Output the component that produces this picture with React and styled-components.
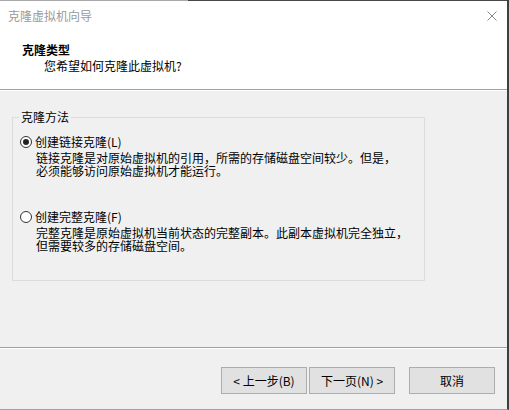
import React from "react";
import styled, { createGlobalStyle } from "styled-components";

const Global = createGlobalStyle`
  html, body { margin: 0; padding: 0; background: #f0f0f0; }
  body { font-family: "Noto Sans CJK SC", "Microsoft YaHei", sans-serif; font-size: 12px; color: #000; }
  * { box-sizing: border-box; }
`;

const Window = styled.div`
  width: 509px;
  height: 410px;
  display: flex;
  flex-direction: column;
  background: #f0f0f0;
  border-right: 2px solid #3f3f3f;
  border-bottom: 1px solid #a0a0a0;
`;

const TopEdge = styled.div`
  height: 1px;
  flex: none;
  background: linear-gradient(to right, #a8a8a8 0, #a8a8a8 188px, #474747 188px, #474747 100%);
`;

const HeaderArea = styled.div`
  height: 88px;
  flex: none;
  background: #fff;
  display: flex;
  flex-direction: column;
`;

const TitleBar = styled.div`
  height: 29px;
  display: flex;
  align-items: center;
  justify-content: space-between;
  padding: 0 10px 0 8px;
`;

const TitleText = styled.span`
  color: #9a9a9a;
  font-size: 12px;
  line-height: 14px;
`;

const CloseIcon = styled.svg`
  width: 10px;
  height: 10px;
  display: block;
`;

const HeaderTexts = styled.div`
  padding: 12px 0 0 22px;
  display: flex;
  flex-direction: column;
`;

const HeaderTitle = styled.div`
  font-weight: bold;
  font-size: 12px;
  line-height: 16px;
`;

const HeaderSub = styled.div`
  font-size: 12px;
  line-height: 16px;
  padding-left: 22px;
`;

const Etched = styled.div`
  height: 2px;
  flex: none;
  border-top: 1px solid #a0a0a0;
  border-bottom: 1px solid #ffffff;
`;

const Body = styled.div`
  flex: 1;
  padding: 19px 0 0 12px;
`;

const GroupBox = styled.fieldset`
  margin: 0;
  padding: 0;
  width: 413px;
  height: 171px;
  border: 1px solid #dcdcdc;
  min-width: 0;
`;

const Legend = styled.legend`
  margin-left: 6px;
  padding: 0 2px;
  font-size: 12px;
  line-height: 14px;
`;

const Options = styled.div`
  padding-top: 11px;
  display: flex;
  flex-direction: column;
  gap: 33px;
`;

const Option = styled.div`
  display: flex;
  flex-direction: column;
`;

const RadioRow = styled.label`
  display: flex;
  align-items: center;
  gap: 3px;
  padding-left: 7px;
  height: 14px;
  line-height: 14px;
`;

const Radio = styled.span`
  width: 12px;
  height: 12px;
  border-radius: 50%;
  border: 1px solid #333;
  background: #fff;
  display: flex;
  align-items: center;
  justify-content: center;
  flex: none;
  &::after {
    content: "";
    width: 6px;
    height: 6px;
    border-radius: 50%;
    background: ${(p) => (p.$checked ? "#222" : "transparent")};
  }
`;

const Desc = styled.div`
  padding-left: 23px;
  margin-top: 2px;
  font-size: 12px;
  line-height: 13px;
`;

const Footer = styled.div`
  height: 60px;
  flex: none;
  display: flex;
  justify-content: flex-end;
  align-items: flex-start;
  padding: 18px 12px 0 0;
`;

const Button = styled.button`
  width: 86px;
  height: 27px;
  margin-left: ${(p) => p.$gap || 0}px;
  background: #e1e1e1;
  border: 1px solid #adadad;
  font-family: inherit;
  font-size: 12px;
  line-height: 14px;
  color: #000;
  padding: 0;
`;

export default function App() {
  return (
    <>
      <Global />
      <Window>
        <TopEdge />
        <HeaderArea>
          <TitleBar>
            <TitleText>克隆虚拟机向导</TitleText>
            <CloseIcon viewBox="0 0 10 10">
              <path d="M0.5 0.5 L9.5 9.5 M9.5 0.5 L0.5 9.5" stroke="#8a8a8a" strokeWidth="1" fill="none" />
            </CloseIcon>
          </TitleBar>
          <HeaderTexts>
            <HeaderTitle>克隆类型</HeaderTitle>
            <HeaderSub>您希望如何克隆此虚拟机?</HeaderSub>
          </HeaderTexts>
        </HeaderArea>
        <Etched />
        <Body>
          <GroupBox>
            <Legend>克隆方法</Legend>
            <Options>
              <Option>
                <RadioRow>
                  <Radio $checked />
                  <span>创建链接克隆(L)</span>
                </RadioRow>
                <Desc>
                  链接克隆是对原始虚拟机的引用，所需的存储磁盘空间较少。但是，
                  <br />
                  必须能够访问原始虚拟机才能运行。
                </Desc>
              </Option>
              <Option>
                <RadioRow>
                  <Radio />
                  <span>创建完整克隆(F)</span>
                </RadioRow>
                <Desc>
                  完整克隆是原始虚拟机当前状态的完整副本。此副本虚拟机完全独立，
                  <br />
                  但需要较多的存储磁盘空间。
                </Desc>
              </Option>
            </Options>
          </GroupBox>
        </Body>
        <Etched />
        <Footer>
          <Button>&lt; 上一步(B)</Button>
          <Button $gap={2}>下一页(N) &gt;</Button>
          <Button $gap={14}>取消</Button>
        </Footer>
      </Window>
    </>
  );
}
